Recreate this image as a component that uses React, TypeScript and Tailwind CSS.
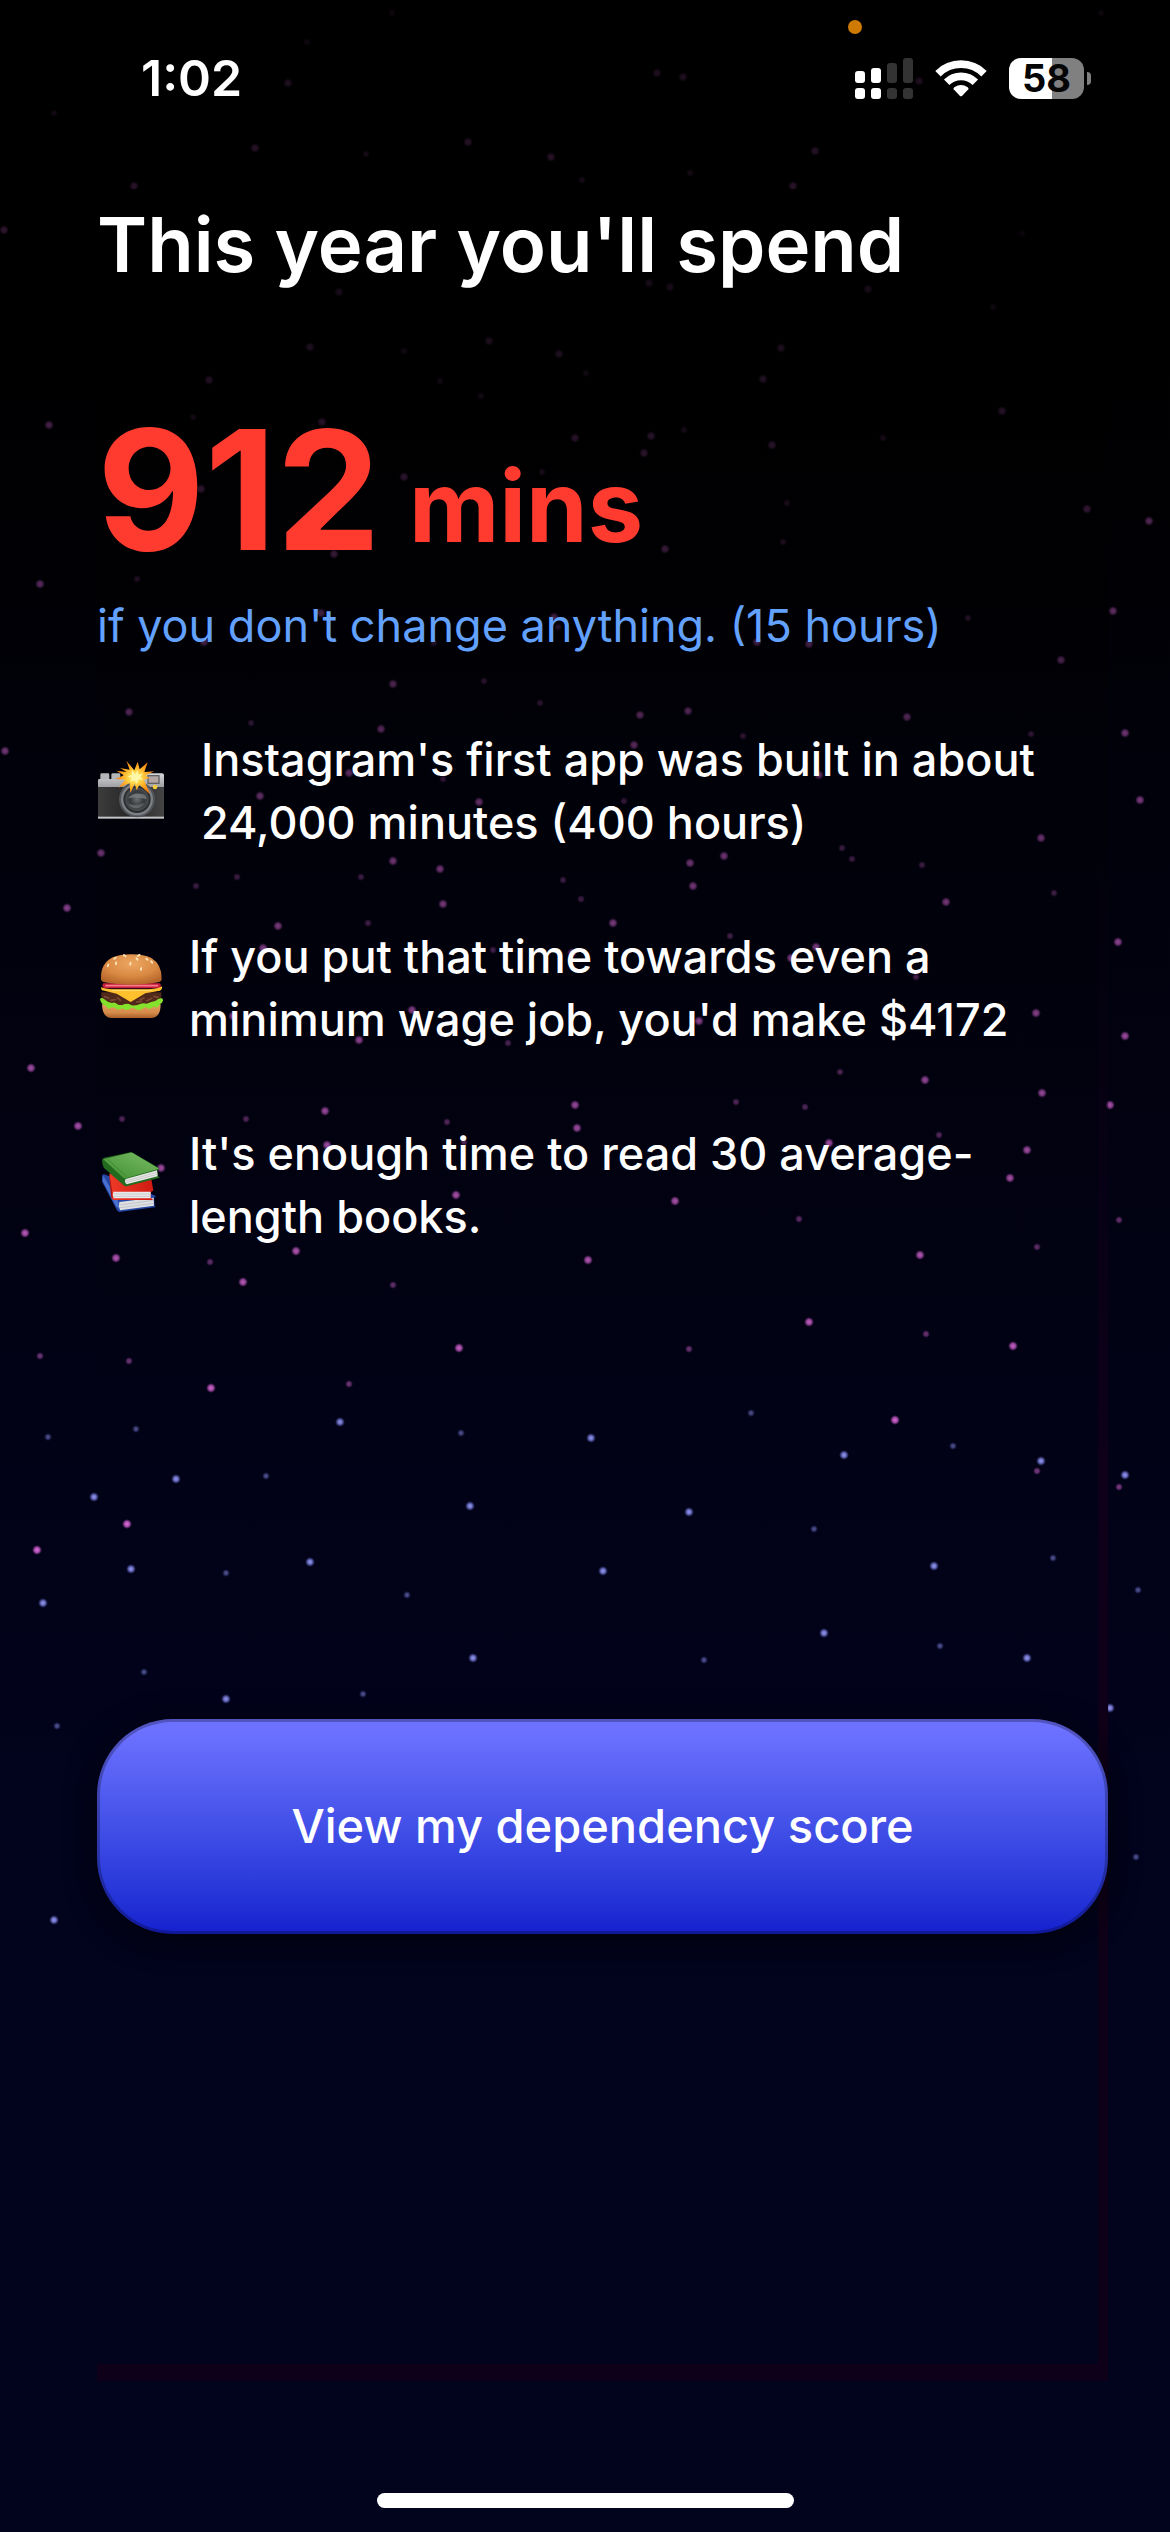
import type { ReactNode } from 'react';

type Star = [number, number];

const PINK: Star[] = [
  [288, 83], [657, 73], [683, 77], [919, 81], [468, 142], [255, 148], [551, 157], [815, 151], [134, 186], [793, 186],
  [649, 283], [670, 287], [339, 292], [868, 289], [4, 230], [310, 347], [489, 341], [559, 354], [781, 348], [209, 380],
  [763, 379], [49, 425], [322, 422], [575, 438], [644, 453], [651, 436], [772, 445], [1002, 411], [404, 477], [201, 489],
  [1087, 509], [1149, 521], [665, 549], [334, 554], [40, 584], [321, 613], [204, 642], [554, 617], [757, 642], [809, 644],
  [1113, 611], [1061, 660], [393, 684], [129, 712], [381, 729], [640, 715], [688, 711], [634, 745], [907, 717], [1125, 733],
  [5, 751], [349, 773], [819, 775], [260, 796], [479, 802], [1140, 800], [1041, 838], [101, 853], [393, 861], [440, 869],
  [690, 863], [724, 856], [693, 886], [946, 902], [67, 908], [443, 904], [613, 923], [278, 926], [263, 948], [816, 947],
  [791, 958], [572, 953], [1118, 942], [1036, 1013], [1125, 1036], [412, 1010], [233, 1016], [359, 1040], [699, 1021],
  [31, 1068], [925, 1080], [1042, 1093], [78, 1126], [325, 1111], [575, 1105], [577, 1128], [1110, 1105], [829, 1143],
  [1027, 1150], [1010, 1178], [327, 1145], [161, 1168], [456, 1195], [675, 1201], [25, 1233], [116, 1258], [296, 1251],
  [243, 1282], [588, 1260], [920, 1255], [809, 1322], [1013, 1346], [459, 1348], [211, 1388], [895, 1420], [127, 1524],
  [37, 1550],
];

const PINK_FAINT: Star[] = [
  [392, 13], [1101, 13], [307, 42], [54, 113], [366, 154], [690, 173], [582, 180], [1022, 233], [993, 307], [404, 351],
  [586, 373], [440, 381], [481, 396], [193, 417], [684, 430], [883, 438], [542, 472], [787, 503], [783, 542], [137, 579],
  [434, 643], [558, 627], [670, 629], [968, 618], [484, 681], [251, 723], [540, 703], [743, 736], [1031, 734], [443, 779],
  [624, 801], [361, 877], [237, 877], [196, 886], [563, 880], [842, 848], [852, 859], [922, 865], [1054, 893], [581, 899],
  [368, 923], [730, 936], [493, 950], [916, 977], [508, 1043], [840, 1072], [122, 1119], [246, 1119], [447, 1122],
  [464, 1142], [736, 1102], [805, 1107], [939, 1135], [251, 1164], [799, 1219], [1119, 1220], [210, 1262], [393, 1285],
  [1037, 1247], [926, 1334], [689, 1349], [40, 1356], [129, 1361], [349, 1384], [1037, 1471], [1119, 1487],
];

const BLUE: Star[] = [
  [340, 1422], [591, 1438], [844, 1455], [1041, 1461], [1125, 1475], [176, 1479], [94, 1497], [470, 1506], [689, 1512],
  [131, 1569], [310, 1562], [603, 1571], [934, 1566], [43, 1603], [824, 1633], [1027, 1658], [473, 1658], [226, 1699],
  [1110, 1708], [54, 1920],
];

const BLUE_FAINT: Star[] = [
  [751, 1413], [461, 1433], [136, 1429], [48, 1437], [953, 1446], [266, 1476], [814, 1529], [226, 1573], [1053, 1558],
  [1138, 1590], [407, 1595], [940, 1646], [704, 1660], [144, 1672], [363, 1694], [57, 1726], [1136, 1857],
];

function Starfield() {
  const layer = (stars: Star[], fill: string, r: number, strength: number) =>
    stars.map(([x, y]) => (
      <circle
        key={`${x}-${y}`}
        cx={x}
        cy={y}
        r={r}
        fill={fill}
        opacity={strength * Math.min(1, 0.12 + 0.88 * (y / 1450) ** 1.2)}
      />
    ));
  return (
    <svg
      className="pointer-events-none absolute inset-0 h-full w-full"
      viewBox="0 0 1170 2532"
      preserveAspectRatio="xMidYMin slice"
      aria-hidden="true"
    >
      <defs>
        <radialGradient id="pinkStar">
          <stop offset="0" stopColor="#e070dc" />
          <stop offset="0.5" stopColor="#c85cc8" stopOpacity="0.85" />
          <stop offset="1" stopColor="#a040a8" stopOpacity="0" />
        </radialGradient>
        <radialGradient id="blueStar">
          <stop offset="0" stopColor="#9a9cf4" />
          <stop offset="0.45" stopColor="#7c80dc" stopOpacity="0.85" />
          <stop offset="1" stopColor="#5055b0" stopOpacity="0" />
        </radialGradient>
      </defs>
      {layer(PINK_FAINT, 'url(#pinkStar)', 4, 0.55)}
      {layer(PINK, 'url(#pinkStar)', 5, 1)}
      {layer(BLUE_FAINT, 'url(#blueStar)', 4, 0.55)}
      {layer(BLUE, 'url(#blueStar)', 5, 1)}
    </svg>
  );
}

function SignalIcon() {
  const bars = [
    { x: 0, y: 39, on: true },
    { x: 48, y: 30, on: true },
    { x: 96, y: 15, on: false },
    { x: 144, y: 0, on: false },
  ];
  return (
    <svg className="h-[41px] w-[58px]" viewBox="0 0 174 123" role="img" aria-label="Signal">
      {bars.map(({ x, y, on }) => (
        <g key={x} fill={on ? '#fff' : '#333'}>
          <rect x={x} y={y} width="30" height={75 - y} rx="9" />
          <rect x={x} y="90" width="30" height="33" rx="9" />
        </g>
      ))}
    </svg>
  );
}

function WifiIcon() {
  return (
    <svg className="h-[39px] w-[52px]" viewBox="-78 -113 156 117" role="img" aria-label="Wi-Fi">
      <g fill="none" stroke="#fff" strokeWidth="23">
        <path d="M-69 -69A98 98 0 0 1 69 -69" />
        <path d="M-43 -43A61 61 0 0 1 43 -43" />
      </g>
      <path d="M-22 -22Q-24 -25 -20 -28A35 35 0 0 1 20 -28Q24 -25 22 -22L3 -2Q0 0 -3 -2Z" fill="#fff" />
    </svg>
  );
}

function Battery() {
  return (
    <div className="flex items-center gap-[3px]" role="img" aria-label="Battery 58 percent">
      <div className="flex h-[41px] w-[75px] items-center justify-center rounded-[12px] bg-linear-to-r from-white from-57% to-[#808080] to-57% text-[38px] leading-none font-bold text-[#050506]">
        58
      </div>
      <div className="h-[13px] w-[4px] rounded-r-full bg-[#808080]" />
    </div>
  );
}

function CameraEmoji() {
  return (
    <svg className="size-[68px] shrink-0" viewBox="51 114 204 204" role="img" aria-label="Camera with flash">
      <defs>
        <linearGradient id="camTop" x1="0" y1="0" x2="0" y2="1">
          <stop offset="0" stopColor="#d4d6d8" />
          <stop offset="1" stopColor="#9b9da0" />
        </linearGradient>
        <linearGradient id="camBody" x1="0" y1="0" x2="1" y2="0">
          <stop offset="0" stopColor="#3c3c3d" />
          <stop offset="0.5" stopColor="#262627" />
          <stop offset="1" stopColor="#454546" />
        </linearGradient>
        <radialGradient id="camLens">
          <stop offset="0" stopColor="#6d7072" />
          <stop offset="0.6" stopColor="#35383a" />
          <stop offset="1" stopColor="#4c4f52" />
        </radialGradient>
        <radialGradient id="camFlash">
          <stop offset="0" stopColor="#fffde0" />
          <stop offset="0.3" stopColor="#ffdc50" />
          <stop offset="0.7" stopColor="#ffa51e" />
          <stop offset="1" stopColor="#ef7b10" />
        </radialGradient>
      </defs>
      <rect x="61" y="163" width="27" height="20" rx="4" fill="#b4b6b8" />
      <rect x="94" y="163" width="27" height="20" rx="4" fill="#b4b6b8" />
      <path d="M54 184Q54 180 58 180H124L134 163H246Q252 163 252 168V206H54Z" fill="url(#camTop)" />
      <rect x="54" y="204" width="198" height="90" fill="url(#camBody)" />
      <rect x="54" y="293" width="198" height="6" fill="#c3c5c7" />
      <rect x="202" y="168" width="37" height="27" fill="#626264" />
      <rect x="206" y="172" width="29" height="19" fill="#b3a6a4" />
      <circle cx="171" cy="241" r="54" fill="#505458" />
      <circle cx="171" cy="241" r="48" fill="#7c8084" />
      <circle cx="171" cy="241" r="41" fill="#2b2d2f" />
      <circle cx="171" cy="241" r="35" fill="url(#camLens)" />
      <path d="M144 238Q157 219 188 225Q202 231 198 240Q170 232 144 238Z" fill="#8d9092" opacity="0.6" />
      <path d="M146 254Q170 264 194 251Q184 268 168 268Q153 267 146 254Z" fill="#909496" opacity="0.45" />
      <circle cx="225" cy="204" r="7" fill="#f5cb3b" />
      <path
        d="M139 125L163 154L173 128L179 151L203 130L193 159L223 157L195 170L210 177L192 182L210 226L178 197L170 214L164 194L151 222L149 192L116 206L136 182L106 180L132 169L109 155L140 159L120 147L149 152Z"
        fill="url(#camFlash)"
      />
      <path d="M156 152L166 166L173 152L176 168L190 162L181 174L190 182L175 181L170 195L163 182L152 188L156 176L142 172L156 168Z" fill="#fff7a8" />
    </svg>
  );
}

function BurgerEmoji() {
  const seeds = [
    [84, 109, 20], [108, 103, 10], [134, 80, -50], [151, 104, 5], [176, 79, 60], [171, 90, -40], [201, 91, -50], [183, 120, 12], [215, 99, -40], [105, 88, 50],
  ];
  return (
    <svg className="size-[68px] shrink-0" viewBox="51 75 204 204" role="img" aria-label="Hamburger">
      <defs>
        <radialGradient id="bunTop" cx="0.5" cy="0.3" r="0.7">
          <stop offset="0" stopColor="#eda763" />
          <stop offset="0.6" stopColor="#d98a43" />
          <stop offset="1" stopColor="#b7662a" />
        </radialGradient>
        <linearGradient id="bunBottom" x1="0" y1="0" x2="0" y2="1">
          <stop offset="0" stopColor="#e39f60" />
          <stop offset="0.6" stopColor="#d58c4a" />
          <stop offset="1" stopColor="#a95e28" />
        </linearGradient>
      </defs>
      <path d="M66 226H242Q242 266 214 267H94Q67 266 66 226Z" fill="url(#bunBottom)" />
      <path d="M64 190Q60 222 92 226Q154 234 216 226Q248 220 244 190Z" fill="#50291a" />
      <path d="M74 203L86 207M92 214L106 212M112 206L121 214M180 212L192 207M200 215L216 208M222 202L234 205M170 219L184 217" stroke="#7c4a32" strokeWidth="5" strokeLinecap="round" />
      <path
        d="M60 210Q64 204 72 210Q82 220 96 222Q104 218 112 226Q122 232 132 226Q144 222 154 229Q166 232 178 226Q190 220 200 224Q214 218 226 216Q236 206 246 208Q252 213 246 221Q240 224 236 231Q229 240 222 232Q214 241 204 239Q195 231 188 239Q176 247 166 240Q158 234 148 241Q137 246 128 238Q118 244 109 240Q102 231 92 237Q82 243 79 231Q62 226 60 210Z"
        fill="#85e22c"
      />
      <path d="M70 163H240Q246 170 238 178H72Q64 170 70 163Z" fill="#c91d3e" />
      <path d="M78 170H232" stroke="#f57b88" strokeWidth="5" strokeLinecap="round" />
      <path d="M64 174Q72 180 100 181H208Q236 179 246 172Q248 180 240 185L196 193L152 219L110 194L66 184Q62 179 64 174Z" fill="#ffc02e" />
      <path d="M96 184H212" stroke="#ffd968" strokeWidth="4" strokeLinecap="round" />
      <path d="M63 150Q61 104 98 85Q120 76 154 76Q192 76 214 87Q246 106 245 150Q244 158 234 160Q198 167 154 167Q110 167 74 160Q64 158 63 150Z" fill="url(#bunTop)" />
      {seeds.map(([x, y, a]) => (
        <ellipse key={`${x}-${y}`} cx={x} cy={y} rx="3" ry="6" fill="#fbe3b4" transform={`rotate(${a} ${x} ${y})`} />
      ))}
    </svg>
  );
}

function BooksEmoji() {
  return (
    <svg className="size-[68px] shrink-0" viewBox="51 66 204 204" role="img" aria-label="Books">
      <defs>
        <linearGradient id="greenCover" x1="0" y1="1" x2="1" y2="0">
          <stop offset="0" stopColor="#3f8f30" />
          <stop offset="1" stopColor="#7cbd66" />
        </linearGradient>
        <linearGradient id="redCover" x1="0" y1="0" x2="1" y2="0">
          <stop offset="0" stopColor="#ee3a28" />
          <stop offset="1" stopColor="#d01a12" />
        </linearGradient>
      </defs>
      <path d="M66 142Q66 136 72 136L110 150L228 201L222 206L224 231L228 234L118 249Q112 248 109 240L66 158Z" fill="#2447a5" />
      <path d="M70 140L114 216L118 240L108 232L68 156Z" fill="#4a70cf" />
      <path d="M118 219L221 206L222 230L120 244Q114 232 118 219Z" fill="#dedfe2" />
      <path d="M119 228L221 214M120 236L221 223" stroke="#b5b7bc" strokeWidth="2" />
      <path d="M88 134L130 132L214 150L220 185L212 189V207L218 210V213H101Q94 212 94 205Z" fill="url(#redCover)" />
      <path d="M88 136L96 184L98 208Q93 206 93 202Z" fill="#a51410" />
      <path d="M100 188H212V208H101Q96 198 100 188Z" fill="#e9e9eb" />
      <path d="M100 195H211M101 202H211" stroke="#bfc0c3" strokeWidth="2" />
      <path d="M66 94Q66 88 73 86L150 70Q156 69 160 72L236 116Q240 119 236 121L232 124L234 142L240 146L140 172Q134 173 130 168L72 117Q67 110 66 94Z" fill="#236a1e" />
      <path d="M70 91L151 71Q155 70 159 73L237 119L137 148Q133 149 130 146Z" fill="url(#greenCover)" />
      <path d="M82 90L140 143" stroke="#367f2a" strokeWidth="3" opacity="0.7" />
      <path d="M137 150L231 124L233 142L140 166Q131 158 137 150Z" fill="#e6e7e6" />
      <path d="M136 156L231 130M137 161L232 136" stroke="#b9bbb9" strokeWidth="2" />
    </svg>
  );
}

function Fact({ icon, gap = 'gap-6', children }: { icon: ReactNode; gap?: string; children: ReactNode }) {
  return (
    <li className={`flex items-center ${gap}`}>
      {icon}
      <p className="pr-8">{children}</p>
    </li>
  );
}

export default function App() {
  return (
    <div className="relative isolate flex min-h-screen flex-col bg-linear-to-b from-black via-[#01010b] via-30% to-[#02031c] to-70% font-['Inter',sans-serif] text-white">
      <Starfield />

      <header className="relative flex h-[156px] items-center justify-between pr-[79px] pl-[141px]">
        <time className="text-[50px] leading-none font-semibold">1:02</time>
        <div className="flex items-center gap-[22px]">
          <SignalIcon />
          <WifiIcon />
          <Battery />
        </div>
        <span className="absolute top-5 right-[308px] size-[14px] rounded-full bg-[#cf7a04]" />
      </header>

      <main className="relative mt-[33px] mr-[62px] ml-[97px] flex flex-1 flex-col bg-linear-to-b from-black/60 via-black/15 via-30% to-transparent to-60% pt-[10px]">
        <div className="pointer-events-none absolute inset-y-0 right-0 w-[10px] bg-linear-to-b from-transparent from-30% to-[#0e0018] to-60%" />
        <div className="pointer-events-none absolute inset-x-0 bottom-0 h-[17px] bg-[#0e0018]" />

        <h1 className="text-[76px] leading-[90px] font-semibold">This year you'll spend</h1>

        <div className="mt-[118px] flex gap-[28px] font-bold text-[#ff3b30]">
          <span className="text-[166px] leading-[166px]">912</span>
          <span className="mb-[18px] self-end text-[99px] leading-[98px]">mins</span>
        </div>
        <p className="mt-[21px] text-[45px] leading-[63px] text-[#63a1ff]">
          if you don't change anything. (15 hours)
        </p>

        <ul className="mt-[71px] flex flex-col gap-[71px] text-[45px] leading-[63px] font-medium">
          <Fact icon={<CameraEmoji />} gap="gap-9">
            Instagram's first app was built in about 24,000 minutes (400 hours)
          </Fact>
          <Fact icon={<BurgerEmoji />}>If you put that time towards even a minimum wage job, you'd make $4172</Fact>
          <Fact icon={<BooksEmoji />}>It's enough time to read 30 average-length books.</Fact>
        </ul>

        <button
          type="button"
          className="relative mt-[471px] h-[215px] w-full rounded-[76px] border-[3px] border-black/25 bg-linear-to-b from-[#6d71ff] from-5% to-[#1620ce] bg-origin-border text-[47px] font-medium text-white shadow-[0_6px_30px_rgba(0,0,0,0.6)]"
        >
          View my dependency score
        </button>
      </main>

      <footer className="relative flex h-[151px] items-end justify-center pb-6">
        <div className="h-[15px] w-[417px] rounded-full bg-white" />
      </footer>
    </div>
  );
}
